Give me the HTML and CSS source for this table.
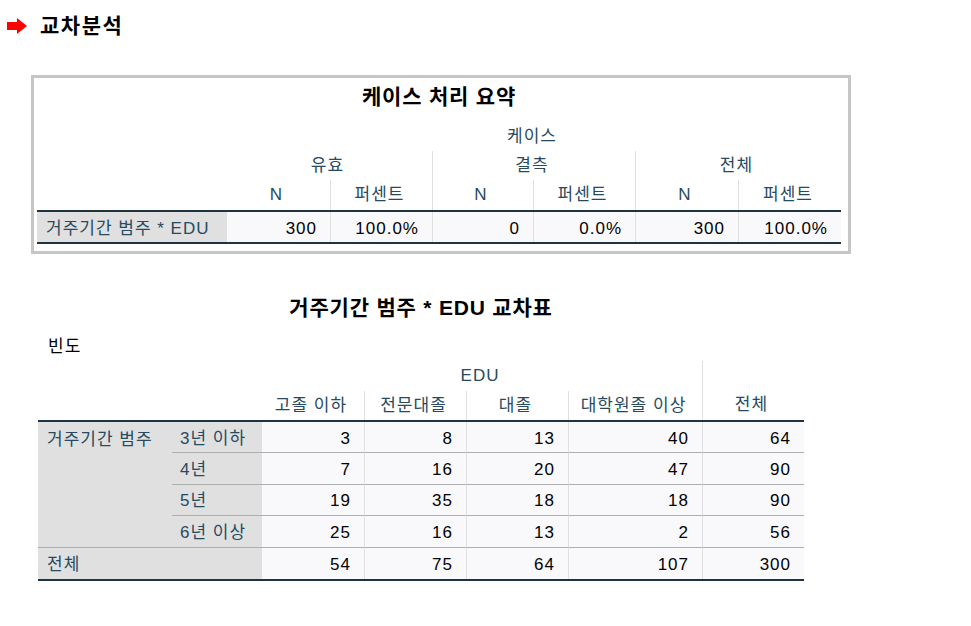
FILE: index.html
```html
<!DOCTYPE html>
<html lang="ko">
<head>
<meta charset="utf-8">
<title>교차분석</title>
<link rel="stylesheet" href="styles.css">
</head>
<body>
<div class="heading">
  <svg class="arrow" width="20" height="16" viewBox="0 0 20 16"><polygon points="0,4 10,4 10,0 20,8 10,16 10,12 0,12" fill="#ff0000"/></svg>
  <span>교차분석</span>
</div>

<section class="box">
  <div class="title">케이스 처리 요약</div>
  <div class="grid t1 head">
    <div class="c blank1"></div>
    <div class="c h span6 top">케이스</div>
    <div class="c h span2">유효</div>
    <div class="c h span2 vl">결측</div>
    <div class="c h span2 vl">전체</div>
    <div class="c h">N</div>
    <div class="c h vl">퍼센트</div>
    <div class="c h vl">N</div>
    <div class="c h vl">퍼센트</div>
    <div class="c h vl">N</div>
    <div class="c h vl">퍼센트</div>
  </div>
  <div class="grid t1 body1">
    <div class="c lab">거주기간 범주 * EDU</div>
    <div class="c num">300</div>
    <div class="c num vl">100.0%</div>
    <div class="c num vl">0</div>
    <div class="c num vl">0.0%</div>
    <div class="c num vl">300</div>
    <div class="c num vl">100.0%</div>
  </div>
</section>

<section class="block2">
  <div class="title">거주기간 범주 * EDU 교차표</div>
  <div class="freq">빈도</div>
  <div class="grid t2 head2">
    <div class="c blank2"></div>
    <div class="c h edu">EDU</div>
    <div class="c h total vl">전체</div>
    <div class="c h">고졸 이하</div>
    <div class="c h vl">전문대졸</div>
    <div class="c h vl">대졸</div>
    <div class="c h vl">대학원졸 이상</div>
  </div>
  <div class="grid t2 body2">
    <div class="c lab grp rl">거주기간 범주</div>

    <div class="c lab rl">3년 이하</div>
    <div class="c num rl">3</div>
    <div class="c num rl vl">8</div>
    <div class="c num rl vl">13</div>
    <div class="c num rl vl">40</div>
    <div class="c num rl vl">64</div>

    <div class="c lab rl">4년</div>
    <div class="c num rl">7</div>
    <div class="c num rl vl">16</div>
    <div class="c num rl vl">20</div>
    <div class="c num rl vl">47</div>
    <div class="c num rl vl">90</div>

    <div class="c lab rl">5년</div>
    <div class="c num rl">19</div>
    <div class="c num rl vl">35</div>
    <div class="c num rl vl">18</div>
    <div class="c num rl vl">18</div>
    <div class="c num rl vl">90</div>

    <div class="c lab rl">6년 이상</div>
    <div class="c num rl">25</div>
    <div class="c num rl vl">16</div>
    <div class="c num rl vl">13</div>
    <div class="c num rl vl">2</div>
    <div class="c num rl vl">56</div>

    <div class="c lab span2">전체</div>
    <div class="c num">54</div>
    <div class="c num vl">75</div>
    <div class="c num vl">64</div>
    <div class="c num vl">107</div>
    <div class="c num vl">300</div>
  </div>
</section>
</body>
</html>
```

FILE: styles.css
```css
* {
  box-sizing: border-box;
}

body {
  margin: 0;
  background: #ffffff;
  color: #000000;
  font-family: "Liberation Sans", "Noto Sans CJK KR", sans-serif;
}

.heading {
  display: flex;
  align-items: center;
  gap: 13px;
  height: 24px;
  margin: 14px 0 0 7px;
  font-size: 21px;
  line-height: 24px;
  font-weight: bold;
  letter-spacing: 1.5px;
}

.arrow {
  display: block;
  flex: none;
}

.box {
  width: 820px;
  margin: 37px 0 0 31px;
  border: 3px solid #c6c6c6;
  padding: 6px 7px 7px 3px;
}

.title {
  text-align: center;
  font-size: 21px;
  font-weight: bold;
  line-height: 26px;
  letter-spacing: 0.8px;
  margin-bottom: 10px;
  white-space: nowrap;
}

.grid {
  display: grid;
  font-size: 17px;
  line-height: 20px;
  letter-spacing: 1px;
  white-space: nowrap;
}

.t1 {
  grid-template-columns: 190px 103px 102px 101px 102px 103px 103px;
}

.head {
  grid-template-rows: 31px 29px 30px;
  border-bottom: 2px solid #1f3443;
}

.head .top {
  padding-top: 3px;
}

.body1 {
  grid-template-rows: 30px;
  border-bottom: 2px solid #1f3443;
}

.body1 .c {
  padding-top: 4px;
}

.c {
  display: flex;
  align-items: center;
  min-width: 0;
}

.h {
  justify-content: center;
  padding-right: 4px;
  color: #264a60;
}

.lab {
  background: #e0e0e0;
  color: #264a60;
  padding-left: 9px;
}

.num {
  justify-content: flex-end;
  padding-right: 13px;
  background: #f9f9fb;
  color: #010205;
}

.vl {
  border-left: 1px solid #e0e0e0;
}

.rl {
  border-bottom: 1px solid #aeaeae;
}

.blank1 {
  grid-column: 1;
  grid-row: 1 / 4;
}

.span6 {
  grid-column: span 6;
}

.span2 {
  grid-column: span 2;
}

.block2 {
  width: 766px;
  margin: 41px 0 0 38px;
}

.block2 .title {
  margin-bottom: 14px;
}

.freq {
  font-size: 17px;
  line-height: 24px;
  padding-left: 10px;
  margin-bottom: 2px;
  letter-spacing: 1px;
}

.t2 {
  grid-template-columns: 134px 90px 102px 102px 102px 134px 102px;
}

.head2 {
  grid-template-rows: 30px 29px;
  border-bottom: 2px solid #1f3443;
}

.blank2 {
  grid-column: 1 / 3;
  grid-row: 1 / 3;
}

.edu {
  grid-column: 3 / 7;
  grid-row: 1;
}

.total {
  grid-column: 7;
  grid-row: 1 / 3;
  align-items: flex-end;
  padding-bottom: 5px;
}

.body2 {
  grid-template-rows: repeat(5, 31.4px);
  border-bottom: 2px solid #1f3443;
}

.body2 .c {
  padding-top: 3px;
}

.body2 .grp {
  grid-column: 1;
  grid-row: 1 / 5;
  align-items: flex-start;
  padding-top: 8px;
}

.body2 .lab {
  padding-left: 8px;
}

.body2 .grp,
.body2 .span2 {
  padding-left: 9px;
}
```
